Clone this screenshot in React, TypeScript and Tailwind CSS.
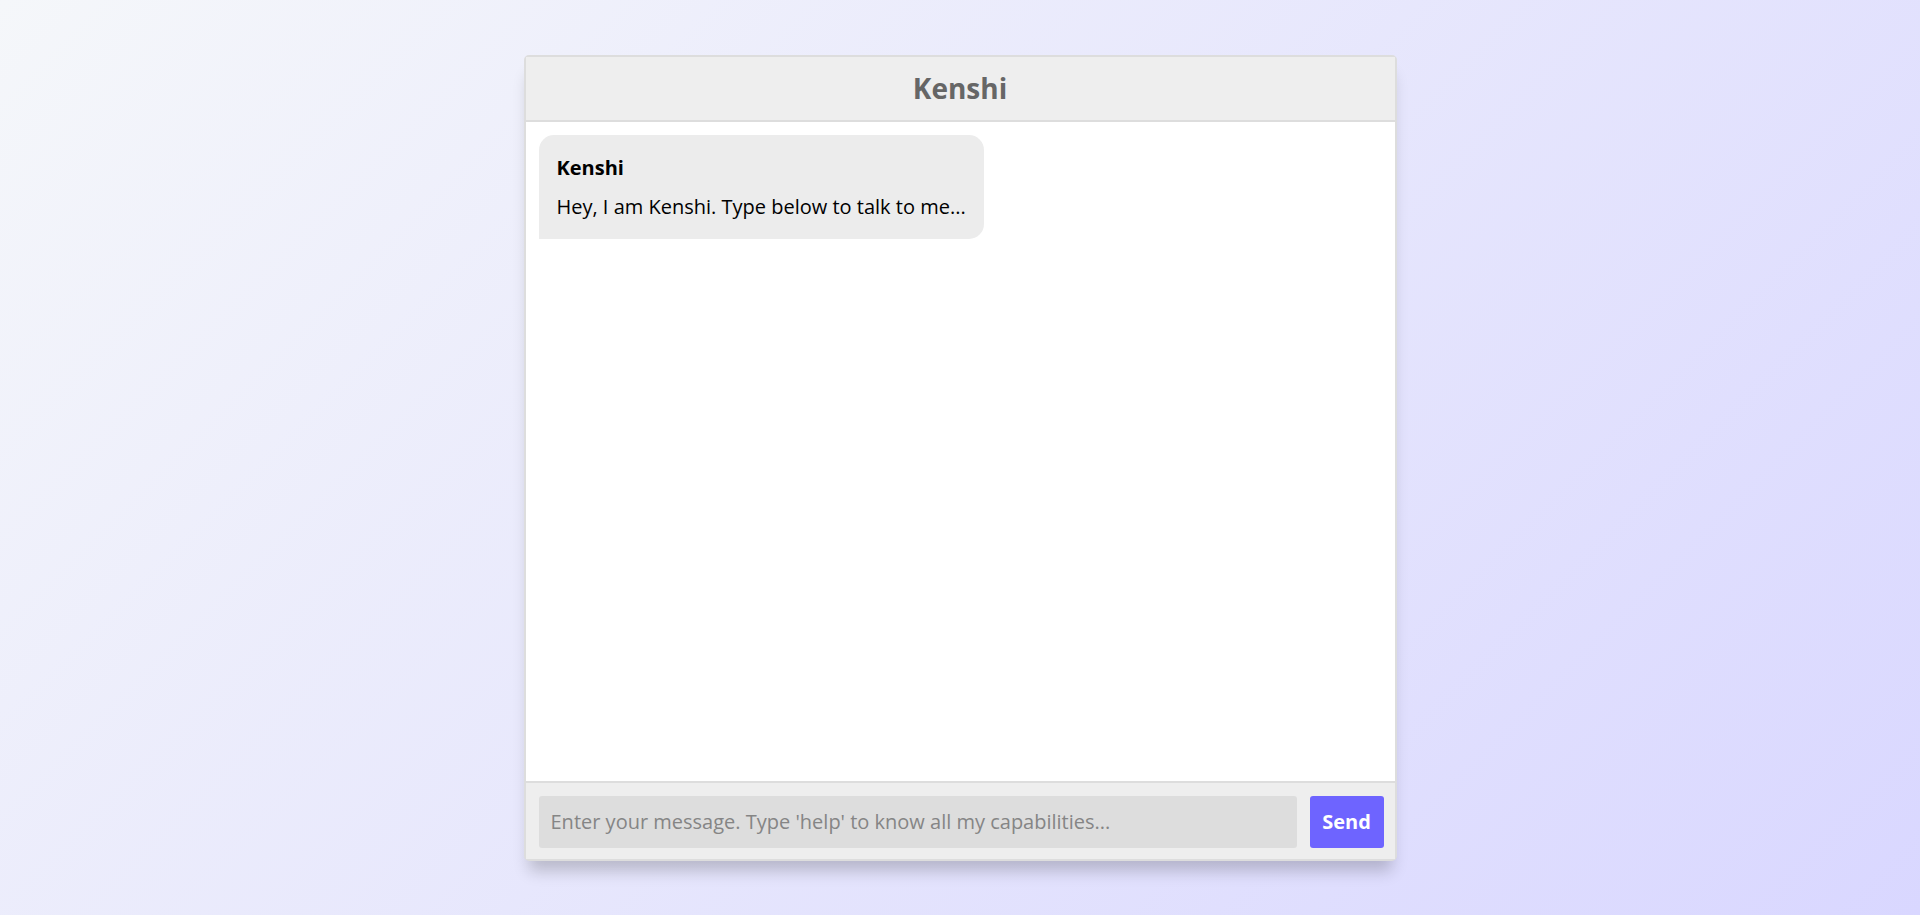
import React, { useState } from 'react';

export default function App() {
  const [text, setText] = useState('');

  return (
    <div
      className="min-h-screen w-full flex items-center justify-center bg-[linear-gradient(135deg,#f5f7fa_0%,#d9d7ff_100%)]"
      style={{ fontFamily: '"Open Sans", "Noto Sans", sans-serif' }}
    >
      <section className="w-[873px] h-[806px] flex flex-col bg-white border-2 border-[#ddd] rounded-[5px] shadow-[0_15px_15px_-5px_rgba(0,0,0,0.2)]">
        {/* Header */}
        <header className="h-[65px] shrink-0 flex items-center justify-center bg-[#eee] border-b-2 border-[#ddd] text-[#666] text-[28px] font-bold">
          Kenshi
        </header>

        {/* Chat */}
        <main className="flex-1 p-[13px] overflow-y-auto">
          <div className="flex items-end">
            <div className="max-w-[450px] px-[18px] pt-[18px] pb-[17px] bg-[#ececec] rounded-[15px] rounded-bl-none text-[20px] leading-normal text-black">
              <div className="font-bold mb-[9px]">Kenshi</div>
              <div>Hey, I am Kenshi. Type below to talk to me...</div>
            </div>
          </div>
        </main>

        {/* Input area */}
        <form
          className="h-[78px] shrink-0 flex items-start gap-[13px] pl-[13px] pr-[11px] pt-[13px] bg-[#eee] border-t-2 border-[#ddd]"
          onSubmit={e => {
            e.preventDefault();
            setText('');
          }}
        >
          <input
            value={text}
            onChange={e => setText(e.target.value)}
            placeholder="Enter your message. Type 'help' to know all my capabilities..."
            className="flex-1 h-[52px] px-3 bg-[#ddd] rounded-[3px] text-[20px] text-[#333] placeholder:text-[#858585] outline-none"
          />
          <button
            type="submit"
            className="w-[74px] h-[52px] bg-[#6e64ff] text-white font-bold text-[20px] rounded-[3px]"
          >
            Send
          </button>
        </form>
      </section>
    </div>
  );
}
